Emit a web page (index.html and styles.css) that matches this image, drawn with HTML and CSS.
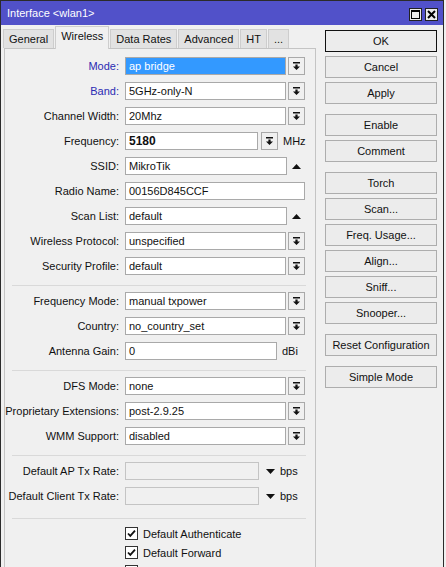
FILE: index.html
```html
<!DOCTYPE html>
<html lang="en">
<head>
  <meta charset="UTF-8">
  <title>Interface &lt;wlan1&gt;</title>
  <link rel="stylesheet" href="styles.css">
</head>
<body>
  <svg width="0" height="0" class="defs">
    <symbol id="dd" viewBox="0 0 7 8"><path d="M0 0h7v1.4H0z M2.4 2.6h2.2v1.8H7L3.5 8 0 4.4h2.4z"/></symbol>
    <symbol id="up" viewBox="0 0 9 5"><path d="M0 5L4.5 0 9 5z"/></symbol>
    <symbol id="down" viewBox="0 0 9 5"><path d="M0 0h9L4.5 5z"/></symbol>
    <symbol id="tick" viewBox="0 0 9 9"><path d="M1 4.5l2.3 2.4L8 1.6" fill="none" stroke="#111" stroke-width="1.8"/></symbol>
  </svg>

  <div class="window">
    <div class="titlebar">
      <span class="title">Interface &lt;wlan1&gt;</span>
      <div class="title-buttons">
        <span class="tbtn">
          <svg width="9" height="9" viewBox="0 0 9 9"><rect x="0.5" y="0.5" width="8" height="8" fill="none" stroke="#000"/><rect x="0" y="0" width="9" height="2"/></svg>
        </span>
        <span class="tbtn">
          <svg width="9" height="9" viewBox="0 0 9 9"><path d="M1 1l7 7M8 1L1 8" stroke="#000" stroke-width="2"/></svg>
        </span>
      </div>
    </div>

    <div class="content">
      <div class="main">
        <div class="tabs">
          <div class="tab">General</div>
          <div class="tab active">Wireless</div>
          <div class="tab">Data Rates</div>
          <div class="tab">Advanced</div>
          <div class="tab">HT</div>
          <div class="tab">...</div>
        </div>

        <div class="panel">
          <div class="row">
            <span class="label link">Mode:</span>
            <div class="field selected">ap bridge</div>
            <span class="drop"><svg><use href="#dd"/></svg></span>
          </div>
          <div class="row">
            <span class="label link">Band:</span>
            <div class="field">5GHz-only-N</div>
            <span class="drop"><svg><use href="#dd"/></svg></span>
          </div>
          <div class="row">
            <span class="label">Channel Width:</span>
            <div class="field">20Mhz</div>
            <span class="drop"><svg><use href="#dd"/></svg></span>
          </div>
          <div class="row">
            <span class="label">Frequency:</span>
            <div class="field freq"><b>5180</b></div>
            <span class="drop freq-drop"><svg><use href="#dd"/></svg></span>
            <span class="unit">MHz</span>
          </div>
          <div class="row">
            <span class="label">SSID:</span>
            <div class="field text">MikroTik</div>
            <span class="arrow"><svg class="tri"><use href="#up"/></svg></span>
          </div>
          <div class="row">
            <span class="label">Radio Name:</span>
            <div class="field wide">00156D845CCF</div>
          </div>
          <div class="row">
            <span class="label">Scan List:</span>
            <div class="field text">default</div>
            <span class="arrow"><svg class="tri"><use href="#up"/></svg></span>
          </div>
          <div class="row">
            <span class="label">Wireless Protocol:</span>
            <div class="field">unspecified</div>
            <span class="drop"><svg><use href="#dd"/></svg></span>
          </div>
          <div class="row">
            <span class="label">Security Profile:</span>
            <div class="field">default</div>
            <span class="drop"><svg><use href="#dd"/></svg></span>
          </div>

          <div class="sep"></div>

          <div class="row">
            <span class="label">Frequency Mode:</span>
            <div class="field">manual txpower</div>
            <span class="drop"><svg><use href="#dd"/></svg></span>
          </div>
          <div class="row">
            <span class="label">Country:</span>
            <div class="field">no_country_set</div>
            <span class="drop"><svg><use href="#dd"/></svg></span>
          </div>
          <div class="row">
            <span class="label">Antenna Gain:</span>
            <div class="field gain">0</div>
            <span class="unit">dBi</span>
          </div>

          <div class="sep"></div>

          <div class="row">
            <span class="label">DFS Mode:</span>
            <div class="field">none</div>
            <span class="drop"><svg><use href="#dd"/></svg></span>
          </div>
          <div class="row">
            <span class="label">Proprietary Extensions:</span>
            <div class="field">post-2.9.25</div>
            <span class="drop"><svg><use href="#dd"/></svg></span>
          </div>
          <div class="row">
            <span class="label">WMM Support:</span>
            <div class="field">disabled</div>
            <span class="drop"><svg><use href="#dd"/></svg></span>
          </div>

          <div class="sep"></div>

          <div class="row">
            <span class="label">Default AP Tx Rate:</span>
            <div class="field rate"></div>
            <svg class="tri rate-tri"><use href="#down"/></svg>
            <span class="unit">bps</span>
          </div>
          <div class="row">
            <span class="label">Default Client Tx Rate:</span>
            <div class="field rate"></div>
            <svg class="tri rate-tri"><use href="#down"/></svg>
            <span class="unit">bps</span>
          </div>

          <div class="sep last"></div>

          <div class="checks">
            <div class="check"><span class="box"><svg><use href="#tick"/></svg></span>Default Authenticate</div>
            <div class="check"><span class="box"><svg><use href="#tick"/></svg></span>Default Forward</div>
            <div class="check"><span class="box"></span>Hide SSID</div>
          </div>
        </div>
      </div>

      <div class="side">
        <div class="btn default">OK</div>
        <div class="btn">Cancel</div>
        <div class="btn">Apply</div>

        <div class="btn group">Enable</div>
        <div class="btn">Comment</div>

        <div class="btn group">Torch</div>
        <div class="btn">Scan...</div>
        <div class="btn">Freq. Usage...</div>
        <div class="btn">Align...</div>
        <div class="btn">Sniff...</div>
        <div class="btn">Snooper...</div>

        <div class="btn group">Reset Configuration</div>

        <div class="btn group">Simple Mode</div>
      </div>
    </div>
  </div>
</body>
</html>
```

FILE: styles.css
```css
:root {
  --bg: #f0f0f0;
  --title-bg: #5151c9;
  --frame: #2b2b2b;
  --border: #a9a9a9;
  --light-border: #c4c4c4;
  --text: #111;
  --link: #2b2bb3;
  --select: #3399ff;
}

body {
  margin: 0;
  background-color: var(--bg);
  font-family: "Liberation Sans", Arial, sans-serif;
  font-size: 11px;
  color: var(--text);
  overflow: hidden;
}

.defs {
  position: absolute;
}

.window {
  width: 444px;
  height: 600px;
  box-sizing: border-box;
  border: 1px solid var(--frame);
  border-bottom: none;
  background-color: var(--bg);
}

.titlebar {
  display: flex;
  justify-content: space-between;
  height: 24px;
  background-color: var(--title-bg);
  color: #fff;
  padding: 0 5px 0 6px;
}

.title {
  line-height: 25px;
}

.title-buttons {
  display: flex;
  gap: 3px;
  padding-top: 7px;
}

.tbtn {
  display: flex;
  align-items: center;
  justify-content: center;
  width: 13px;
  height: 13px;
  box-sizing: border-box;
  border: 1px solid #222;
  background-color: #ececec;
}

.content {
  display: flex;
}

.main {
  padding-left: 3px;
  width: 312px;
}

.tabs {
  display: flex;
  align-items: flex-end;
  height: 23px;
  gap: 1px;
  margin-left: -1px;
}

.tab {
  height: 19px;
  line-height: 19px;
  padding: 0 5px;
  box-sizing: border-box;
  border: 1px solid #cdcdcd;
  border-bottom: none;
  background-color: #e2e2e2;
}

.tab.active {
  height: 23px;
  line-height: 19px;
  background-color: var(--bg);
  margin-bottom: -1px;
  position: relative;
  z-index: 1;
}

.panel {
  display: flex;
  flex-direction: column;
  border: 1px solid var(--light-border);
  padding-top: 8px;
  height: 560px;
}

.row {
  display: flex;
  align-items: center;
  height: 18px;
  margin-bottom: 7px;
}

.label {
  width: 120px;
  box-sizing: border-box;
  padding-right: 6px;
  text-align: right;
  white-space: nowrap;
}

.label.link {
  color: var(--link);
}

.field {
  width: 161px;
  height: 18px;
  box-sizing: border-box;
  border: 1px solid var(--border);
  background-color: #fff;
  padding-left: 3px;
  line-height: 16px;
  white-space: nowrap;
}

.field.selected {
  background-color: var(--select);
  color: #fff;
}

.field.text {
  width: 162px;
}

.field.wide {
  width: 180px;
}

.field.freq {
  width: 133px;
}

.field.freq b {
  font-size: 12px;
}

.field.gain {
  width: 152px;
}

.field.rate {
  width: 134px;
  background-color: var(--bg);
  border-color: #c4c4c4;
}

.drop {
  display: flex;
  align-items: center;
  justify-content: center;
  width: 17px;
  height: 18px;
  box-sizing: border-box;
  margin-left: 2px;
  border: 1px solid var(--border);
  background-color: var(--bg);
}

.drop svg {
  width: 7px;
  height: 8px;
  fill: #111;
}

.drop.freq-drop {
  margin-left: 3px;
}

.arrow {
  display: flex;
  justify-content: center;
  width: 18px;
}

.tri {
  width: 9px;
  height: 5px;
  fill: #111;
}

.rate-tri {
  margin-left: 7px;
}

.unit {
  margin-left: 5px;
}

.sep {
  height: 1px;
  background-color: #d9d9d9;
  margin: 3px 9px 6px 7px;
}

.sep.last {
  margin-top: 6px;
  margin-bottom: 5px;
}

.checks {
  padding-left: 120px;
}

.check {
  display: flex;
  align-items: center;
  height: 19px;
}

.box {
  display: flex;
  align-items: center;
  justify-content: center;
  width: 13px;
  height: 13px;
  box-sizing: border-box;
  border: 1px solid #333;
  background-color: #fff;
  margin-right: 5px;
}

.box svg {
  width: 9px;
  height: 9px;
}

.side {
  display: flex;
  flex-direction: column;
  margin-left: 9px;
  width: 112px;
  padding-top: 5px;
}

.btn {
  height: 22px;
  box-sizing: border-box;
  border: 1px solid #adadad;
  background-color: #ececec;
  text-align: center;
  line-height: 20px;
  margin-bottom: 4px;
}

.btn.default {
  border-color: #111;
}

.btn.group {
  margin-top: 6px;
}
```
